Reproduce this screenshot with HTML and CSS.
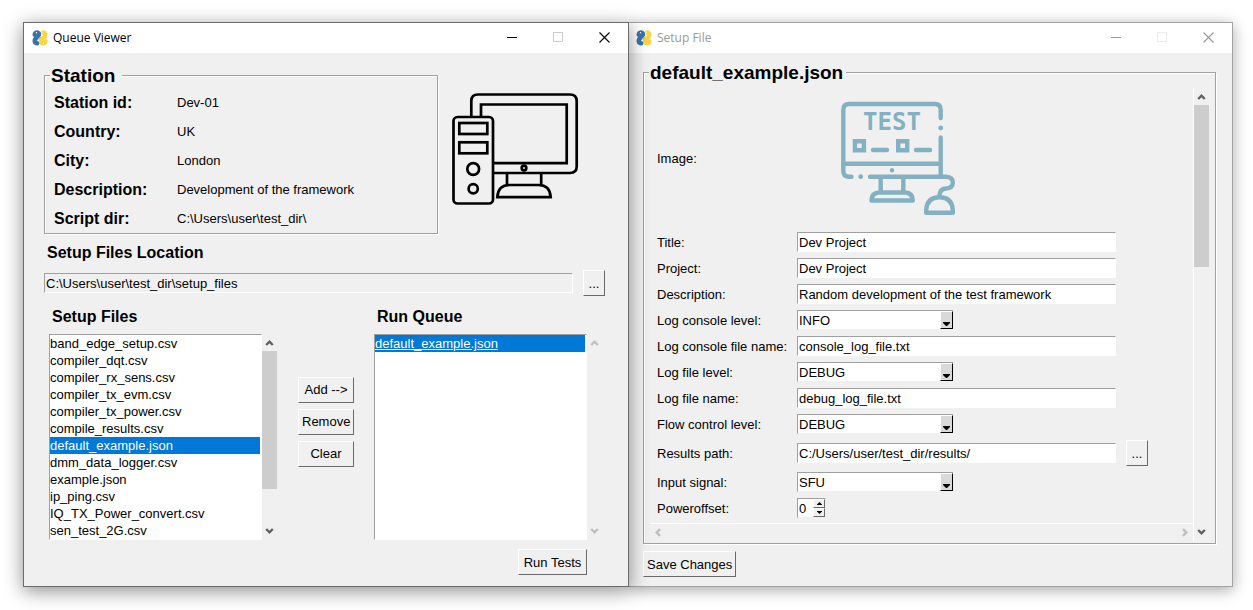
FILE: index.html
```html
<!DOCTYPE html>
<html lang="en">
<head>
<meta charset="utf-8">
<title>Queue Viewer</title>
<link rel="stylesheet" href="styles.css">
</head>
<body>
<svg class="defs" aria-hidden="true">
  <symbol id="logo" viewBox="0 0 16 16">
    <g fill="none" stroke-width="4.600" stroke-linecap="round" stroke-linejoin="round">
      <path stroke="#ffd545" d="M11 2.600Q13.200 3 13.200 5Q13 7 11.500 7.800Q9.200 9 9 11Q9 13 11 13.300Q13 13 13.300 11.200"/>
      <path stroke="#3a74a6" d="M2.800 4.800Q3 2.800 5 2.600Q7 2.800 7 5Q6.800 7 4.600 8Q2.800 9 2.800 11Q3 13 5 13.300"/>
    </g>
    <path d="M10 1.500Q10.500 6 7.500 8Q6 9 6 11" fill="none" stroke="#fff" stroke-width=".8"/>
    <circle cx="4.500" cy="2.800" r=".7" fill="#fff"/>
    <circle cx="11.500" cy="13.200" r=".7" fill="#fff"/>
  </symbol>
  <symbol id="minimize" viewBox="0 0 11 11"><path d="M0 5.500H10" stroke="currentColor" fill="none"/></symbol>
  <symbol id="maximize" viewBox="0 0 11 11"><path d="M.5 .5H9.500V9.500H.5Z" stroke="currentColor" fill="none"/></symbol>
  <symbol id="close" viewBox="0 0 11 11"><path d="M.5 .5L10.500 10.500M10.500 .5L.5 10.500" stroke="currentColor" stroke-width="1.100" fill="none"/></symbol>
  <symbol id="chevron" viewBox="0 0 9 9"><path d="M1.200 7L4.500 3.700L7.800 7" stroke="currentColor" stroke-width="2.400" fill="none"/></symbol>
  <symbol id="drop" viewBox="0 0 7 4"><path d="M0 0H7V1L4 4H3L0 1Z"/></symbol>
  <symbol id="tri" viewBox="0 0 5 3"><path d="M0 3V2.500L2.500 0L5 2.500V3Z"/></symbol>
</svg>

<main class="desktop">
  <section class="window window-active" aria-label="Queue Viewer">
    <header class="titlebar">
      <svg class="logo" aria-hidden="true"><use href="#logo"/></svg>
      <h1 class="title">Queue Viewer</h1>
      <button class="caption" aria-label="Minimize"><svg><use href="#minimize"/></svg></button>
      <button class="caption caption-off" aria-label="Maximize" disabled><svg><use href="#maximize"/></svg></button>
      <button class="caption" aria-label="Close"><svg><use href="#close"/></svg></button>
    </header>
    <div class="queue-body">
      <div class="station-row">
        <fieldset class="frame station">
          <legend class="station-legend">Station</legend>
          <dl class="facts">
            <dt>Station id:</dt><dd>Dev-01</dd>
            <dt>Country:</dt><dd>UK</dd>
            <dt>City:</dt><dd>London</dd>
            <dt>Description:</dt><dd>Development of the framework</dd>
            <dt>Script dir:</dt><dd>C:\Users\user\test_dir\</dd>
          </dl>
        </fieldset>
        <svg class="computer" viewBox="450 90 130 119" role="img" aria-label="Computer">
          <g fill="none" stroke="#000" stroke-width="2.700">
            <path d="M471.300 116V101Q471.300 94.500 478 94.500H570Q576.700 94.500 576.700 101V166.500Q576.700 173 570 173H494"/>
            <path d="M481 116V104.500H566.700V163.200H494"/>
            <rect x="453.500" y="117" width="39.500" height="86.500" rx="4"/>
            <rect x="459.300" y="123" width="28" height="11"/>
            <rect x="459.300" y="142.300" width="28" height="11"/>
            <circle cx="473.200" cy="169" r="5.900"/>
            <circle cx="473.200" cy="188.700" r="4.600"/>
            <circle cx="524" cy="168" r="2.300"/>
            <path d="M507 173V185M541.200 173V185"/>
            <path d="M497.300 197.200Q498 185 509.500 185H538.500Q550 185 550.700 197.200Z"/>
          </g>
        </svg>
      </div>

      <h2 class="heading location-heading"><label for="location">Setup Files Location</label></h2>
      <div class="location">
        <input class="field field-flat" id="location" value="C:\Users\user\test_dir\setup_files">
        <button class="btn btn-browse" aria-label="Browse setup files">...</button>
      </div>

      <div class="lists">
        <div class="list-column">
          <h2 class="heading"><label for="files">Setup Files</label></h2>
          <div class="listbox">
            <select class="list" id="files" size="12">
              <option>band_edge_setup.csv</option>
              <option>compiler_dqt.csv</option>
              <option>compiler_rx_sens.csv</option>
              <option>compiler_tx_evm.csv</option>
              <option>compiler_tx_power.csv</option>
              <option>compile_results.csv</option>
              <option selected>default_example.json</option>
              <option>dmm_data_logger.csv</option>
              <option>example.json</option>
              <option>ip_ping.csv</option>
              <option>IQ_TX_Power_convert.csv</option>
              <option>sen_test_2G.csv</option>
            </select>
            <div class="vbar">
              <svg class="arrow"><use href="#chevron"/></svg>
              <div class="track"><div class="thumb thumb-files"></div></div>
              <svg class="arrow arrow-down"><use href="#chevron"/></svg>
            </div>
          </div>
        </div>
        <div class="actions">
          <button class="btn">Add --&gt;</button>
          <button class="btn">Remove</button>
          <button class="btn">Clear</button>
        </div>
        <div class="list-column">
          <h2 class="heading"><label for="queue">Run Queue</label></h2>
          <div class="listbox">
            <select class="list list-active" id="queue" size="12">
              <option selected>default_example.json</option>
            </select>
            <div class="vbar vbar-off">
              <svg class="arrow"><use href="#chevron"/></svg>
              <div class="track"></div>
              <svg class="arrow arrow-down"><use href="#chevron"/></svg>
            </div>
          </div>
        </div>
      </div>
      <div class="run"><button class="btn">Run Tests</button></div>
    </div>
  </section>

  <section class="window window-idle" aria-label="Setup File">
    <header class="titlebar">
      <svg class="logo" aria-hidden="true"><use href="#logo"/></svg>
      <h1 class="title">Setup File</h1>
      <button class="caption" aria-label="Minimize"><svg><use href="#minimize"/></svg></button>
      <button class="caption caption-off" aria-label="Maximize" disabled><svg><use href="#maximize"/></svg></button>
      <button class="caption" aria-label="Close"><svg><use href="#close"/></svg></button>
    </header>
    <div class="setup-body">
      <fieldset class="frame">
        <legend>default_example.json</legend>
        <div class="scroller">
          <div class="pane">
            <div class="form">
              <span class="label">Image:</span>
              <svg class="picture" viewBox="830 90 136 136" role="img" aria-label="Test computer">
                <g fill="none" stroke="#84b1c2" stroke-width="4.400" stroke-linecap="round" stroke-linejoin="round">
                  <path d="M940.700 118V110Q940.700 104 935 104H849Q843.300 104 843.300 110V171Q843.300 176.700 849 176.700H851.500"/>
                  <path d="M940.700 137.500V176M843.300 163.700H940.700"/>
                  <path d="M870 176.700H946Q952.800 177 952.800 182.500Q952.800 188.300 946 188.500Q939.500 189 939.500 196"/>
                  <path d="M880.700 177V192M903.300 177V192"/>
                  <path d="M879 192.500H905Q912.800 193 912.800 200.500H871.500Q871.500 193 879 192.500Z"/>
                  <path d="M926.200 212.800V210Q927 197.200 939.500 197.200Q952 197.200 952.800 210V212.800Z"/>
                  <path d="M873 150H887M916 150H930"/>
                  <path stroke-linejoin="miter" d="M854.900 141.200h9v9h-9ZM898.200 141.200h9v9h-9Z"/>
                </g>
                <g fill="#84b1c2">
                  <circle cx="940.700" cy="128" r="2.400"/>
                  <circle cx="860.700" cy="176.700" r="2.400"/>
                  <circle cx="892" cy="170.300" r="2.200"/>
                  <text class="picture-text" x="892" y="130" text-anchor="middle">TEST</text>
                </g>
              </svg>

              <label for="title">Title:</label>
              <input class="field" id="title" value="Dev Project">

              <label for="project">Project:</label>
              <input class="field" id="project" value="Dev Project">

              <label for="description">Description:</label>
              <input class="field" id="description" value="Random development of the test framework">

              <label for="console-level">Log console level:</label>
              <span class="combo">
                <select id="console-level"><option>INFO</option></select>
                <span class="combo-arrow"><svg><use href="#drop"/></svg></span>
              </span>

              <label for="console-file">Log console file name:</label>
              <input class="field" id="console-file" value="console_log_file.txt">

              <label for="file-level">Log file level:</label>
              <span class="combo">
                <select id="file-level"><option>DEBUG</option></select>
                <span class="combo-arrow"><svg><use href="#drop"/></svg></span>
              </span>

              <label for="log-file">Log file name:</label>
              <input class="field" id="log-file" value="debug_log_file.txt">

              <label for="flow-level">Flow control level:</label>
              <span class="combo">
                <select id="flow-level"><option>DEBUG</option></select>
                <span class="combo-arrow"><svg><use href="#drop"/></svg></span>
              </span>

              <label for="results">Results path:</label>
              <input class="field" id="results" value="C:/Users/user/test_dir/results/">
              <button class="btn btn-browse" aria-label="Browse results path">...</button>

              <label for="signal">Input signal:</label>
              <span class="combo">
                <select id="signal"><option>SFU</option></select>
                <span class="combo-arrow"><svg><use href="#drop"/></svg></span>
              </span>

              <label for="offset">Poweroffset:</label>
              <span class="spin">
                <input id="offset" inputmode="numeric" value="0">
                <span class="spin-buttons">
                  <button aria-label="Increase"><svg><use href="#tri"/></svg></button>
                  <button aria-label="Decrease"><svg class="flip"><use href="#tri"/></svg></button>
                </span>
              </span>
            </div>
            <div class="hbar">
              <svg class="arrow arrow-left"><use href="#chevron"/></svg>
              <svg class="arrow arrow-right"><use href="#chevron"/></svg>
            </div>
          </div>
          <div class="vbar">
            <svg class="arrow"><use href="#chevron"/></svg>
            <div class="track"><div class="thumb thumb-form"></div></div>
            <svg class="arrow arrow-down"><use href="#chevron"/></svg>
          </div>
        </div>
      </fieldset>
      <button class="btn save">Save Changes</button>
    </div>
  </section>
</main>
</body>
</html>
```

FILE: styles.css
```css
* {
  box-sizing: border-box;
}

body {
  margin: 0;
  background: #fff;
  color: #000;
  font: 13px/17px "Liberation Sans", Arial, sans-serif;
}

button,
input,
select {
  margin: 0;
  padding: 0;
  border: 0;
  border-radius: 0;
  background: none;
  color: inherit;
  font: inherit;
  outline: 0;
}

.defs {
  display: none;
}

.desktop {
  display: flex;
  padding: 22px 20px 23px 23px;
}

/* Windows */

.window {
  min-width: 0;
  background: #f0f0f0;
  border: 1px solid #6b6b6b;
}

.window-active {
  flex: 1 1 606px;
  z-index: 1;
  box-shadow: 0 4px 18px rgba(0, 0, 0, 0.45);
}

.window-idle {
  flex: 1 1 604px;
  border-color: #a3a3a3;
  border-left: 0;
  box-shadow: 0 3px 14px rgba(0, 0, 0, 0.35);
}

.titlebar {
  display: flex;
  align-items: center;
  height: 30px;
  padding-left: 8px;
  background: #fff;
}

.window-idle .titlebar {
  padding-left: 7px;
  color: #999;
}

.logo {
  width: 16px;
  height: 16px;
}

.title {
  flex: 1;
  margin: 0 0 0 5px;
  font: 12px/16px "Open Sans", "Noto Sans", sans-serif;
}

.caption {
  display: flex;
  align-items: center;
  justify-content: center;
  width: 46px;
  height: 30px;
  padding: 0 1px 2px 0;
}

.caption svg {
  width: 11px;
  height: 11px;
}

.caption-off {
  color: #ccc;
}

.window-idle .caption-off {
  color: #ebebeb;
}

/* Shared parts */

.frame {
  min-width: 0;
  margin: 0;
  padding: 0;
  border: 1px solid #a0a0a0;
  box-shadow: 1px 1px 0 #fff, inset 1px 1px 0 #fff;
}

legend {
  margin-left: 5px;
  padding: 0 3px 0 1px;
  background: #f0f0f0;
  font-size: 19px;
  font-weight: bold;
  line-height: 21px;
}

.heading {
  margin: 0;
  font-size: 16px;
  line-height: 22px;
}

.field {
  width: 100%;
  min-width: 0;
  height: 20px;
  padding: 0 1px;
  background: #fff;
  border: 1px solid;
  border-color: #a0a0a0 #fff #fff #a0a0a0;
}

.field-flat {
  flex: 1;
  background: #f0f0f0;
}

.btn {
  height: 26px;
  padding: 0 3px;
  background: #f0f0f0;
  border: 1px solid;
  border-color: #fff #696969 #696969 #fff;
  white-space: nowrap;
}

.btn-browse {
  width: 22px;
}

.arrow {
  flex: none;
  width: 9px;
  height: 9px;
  margin: 4px 3px;
}

.arrow-down {
  transform: rotate(180deg);
}

.arrow-left {
  transform: rotate(-90deg);
}

.arrow-right {
  transform: rotate(90deg);
}

.vbar {
  display: flex;
  flex: none;
  flex-direction: column;
  width: 15px;
  color: #606060;
}

.vbar-off,
.hbar {
  color: #bfbfbf;
}

.track {
  flex: 1;
}

.thumb {
  background: #cdcdcd;
}

.thumb-files {
  height: 80%;
}

.thumb-form {
  height: 162px;
}

/* Queue Viewer */

.queue-body {
  padding: 12px 23px 11px 20px;
}

.station-row {
  display: flex;
  align-items: center;
  gap: 12px;
  padding-right: 25px;
}

.station {
  flex: 1;
}

.station-legend {
  padding-right: 7px;
}

.facts {
  display: grid;
  grid-template-columns: 123px 1fr;
  margin: 0;
  padding: 2px 0 0 9px;
  line-height: 29px;
}

.facts dt {
  font-size: 16px;
  font-weight: bold;
}

.facts dd {
  margin: 0;
}

.computer {
  flex: none;
  width: 130px;
  height: 119px;
}

.location-heading {
  padding: 8px 3px 6px;
}

.location {
  display: flex;
  align-items: center;
  gap: 10px;
}

.lists {
  display: flex;
  align-items: center;
  padding: 9px 3px 9px 5px;
}

.list-column {
  flex: 1;
  min-width: 0;
}

.list-column .heading {
  padding: 1px 2px 6px 3px;
}

.listbox {
  display: flex;
}

.list {
  flex: 1;
  min-width: 0;
  height: 206px;
  padding: 0 1px 0 0;
  overflow: hidden;
  scrollbar-width: none;
  background: #fff;
  border: 1px solid;
  border-color: #a0a0a0 #fff #fff #a0a0a0;
}

.list option {
  height: 17px;
  min-height: 17px;
  padding: 1px 0 0;
  line-height: 16px;
}

.list option:checked {
  background: linear-gradient(#0078d7, #0078d7);
  color: #fff;
  -webkit-text-fill-color: #fff;
}

.list-active option:checked {
  text-decoration: underline;
}

.actions {
  display: flex;
  flex: none;
  flex-direction: column;
  gap: 6px;
  width: 56px;
  margin: 0 20px 0 21px;
  padding-bottom: 2px;
}

.run {
  display: flex;
  justify-content: flex-end;
  padding-right: 18px;
}

.run .btn {
  min-width: 69px;
}

/* Setup File */

.setup-body {
  padding: 9px 16px 9px 14px;
}

.scroller {
  display: flex;
  padding: 5px 6px 2px;
}

.pane {
  flex: 1;
  min-width: 0;
  border-right: 1px solid #fff;
}

.form {
  display: grid;
  grid-template-columns: 140px minmax(0, 319px) auto;
  row-gap: 6px;
  align-items: center;
  justify-content: start;
  padding: 2px 7px 5px;
}

.form label,
.form .label {
  grid-column: 1;
}

.form .btn-browse {
  margin-left: 10px;
}

.picture {
  width: 136px;
  height: 136px;
  margin-left: 33px;
}

.picture-text {
  font: bold 24px "DejaVu Sans Mono", monospace;
}

.combo,
.spin {
  display: flex;
  height: 20px;
  background: #fff;
  border: 1px solid;
  border-color: #a0a0a0 #f0f0f0 #f0f0f0 #a0a0a0;
}

.combo {
  display: grid;
  width: 156px;
  border-right: 0;
}

.combo select {
  grid-area: 1 / 1;
  appearance: none;
  padding: 0 14px 0 1px;
}

.combo-arrow {
  display: flex;
  grid-area: 1 / 1;
  justify-content: center;
  justify-self: end;
  align-items: flex-end;
  width: 13px;
  padding-bottom: 2px;
  background: #d9d9d9;
  border: 1px solid;
  border-color: #fff #000 #000 #fff;
  pointer-events: none;
}

.combo-arrow svg {
  width: 7px;
  height: 4px;
}

.spin {
  width: 29px;
}

.spin input {
  flex: 1;
  min-width: 0;
  padding-left: 1px;
}

.spin-buttons {
  display: flex;
  flex-direction: column;
  width: 12px;
}

.spin-buttons button {
  display: flex;
  flex: 1;
  align-items: center;
  justify-content: center;
  background: #f0f0f0;
  border: 1px solid;
  border-color: #fff #696969 #696969 #fff;
}

.spin-buttons svg {
  width: 5px;
  height: 3px;
}

.flip {
  transform: rotate(180deg);
}

.hbar {
  display: flex;
  justify-content: space-between;
  border-top: 1px solid #fff;
}

.save {
  margin-top: 7px;
}
```
